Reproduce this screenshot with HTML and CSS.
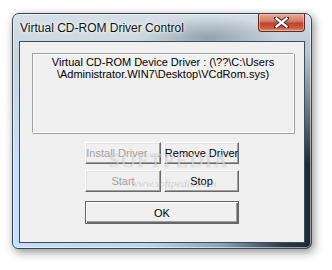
FILE: index.html
```html
<!DOCTYPE html>
<html>
<head>
    <title>Virtual CD-ROM Driver Control</title>
    <link rel="stylesheet" href="styles.css">
</head>
<body>
    <div class="stage">
        <div class="window">
            <div class="titlebar">
                <span class="title">Virtual CD-ROM Driver Control</span>
                <div class="close-btn">
                    <svg width="15" height="11" viewBox="0 0 15 11">
                        <path d="M2 1 L13 10 M13 1 L2 10" stroke="#3a2a28" stroke-width="4.2" stroke-linecap="square"/>
                        <path d="M2.6 1.6 L12.4 9.4 M12.4 1.6 L2.6 9.4" stroke="#fff" stroke-width="2.4" stroke-linecap="square"/>
                    </svg>
                </div>
            </div>
            <div class="client">
                <div class="status-box">
                    Virtual CD-ROM Device Driver : (\??\C:\Users<br>\Administrator.WIN7\Desktop\VCdRom.sys)
                </div>
                <div class="button-grid">
                    <div class="btn disabled">Install Driver ...</div>
                    <div class="btn">Remove Driver</div>
                    <div class="btn disabled">Start</div>
                    <div class="btn">Stop</div>
                </div>
                <div class="btn btn-default">OK</div>
                <!-- softpedia watermark from the screenshot -->
                <div class="watermark">SOFTPEDIA</div>
                <div class="watermark-url">www.softpedia.com</div>
            </div>
        </div>
    </div>
</body>
</html>
```

FILE: styles.css
```css
body {
    margin: 0;
    background-color: #fff;
    font-family: "Liberation Sans", Arial, sans-serif;
}

.stage {
    width: 332px;
    height: 270px;
    padding: 13px 0 0 12px;
    box-sizing: border-box;
}

.window {
    width: 300px;
    height: 236px;
    box-sizing: border-box;
    display: flex;
    flex-direction: column;
    padding: 0 6px 5px 6px;
    border: 1px solid #3d4650;
    border-radius: 7px 7px 6px 6px;
    background:
        radial-gradient(ellipse 70px 22px at 195px 24px, rgba(95, 108, 120, 0.5), rgba(95, 108, 120, 0) 100%),
        linear-gradient(to bottom, rgba(214, 223, 231, 1) 0, rgba(200, 212, 222, 0.9) 40px, rgba(200, 212, 222, 0) 150px),
        linear-gradient(to right, #c4e0fa 0%, #b8d5f0 45%, #8aa2b8 70%, #2c3c4c 90%, #1c2834 100%);
    box-shadow: inset 0 0 0 1px rgba(255, 255, 255, 0.55), 2px 3px 10px rgba(0, 0, 0, 0.45);
}

.titlebar {
    height: 27px;
    display: flex;
    align-items: center;
}

.title {
    margin-left: 1px;
    font-size: 12px;
    color: #111;
    text-shadow: 0 0 6px #fff, 0 0 3px #fff;
}

.close-btn {
    align-self: flex-start;
    margin-left: auto;
    width: 47px;
    height: 18px;
    box-sizing: border-box;
    display: flex;
    align-items: center;
    justify-content: center;
    border: 1px solid #5a2a22;
    border-top: none;
    border-radius: 0 0 4px 4px;
    background: linear-gradient(to bottom, #e6a895 0%, #d7806a 40%, #c0432c 55%, #c95a40 80%, #e08a6a 100%);
    box-shadow: inset 0 0 0 1px rgba(255, 220, 200, 0.5);
}

.client {
    flex: 1;
    position: relative;
    border: 1px solid #3e4c5a;
    background-color: #f0f0f0;
    display: flex;
    flex-direction: column;
    align-items: center;
}

.status-box {
    align-self: flex-start;
    width: 262px;
    height: 80px;
    box-sizing: border-box;
    margin: 11px 0 0 12px;
    padding-top: 2px;
    border: 1px solid #a0a0a0;
    border-right-color: #fff;
    border-bottom-color: #fff;
    box-shadow: inset 1px 1px 0 #fff, 1px 1px 0 #a0a0a0;
    font-size: 11px;
    line-height: 12px;
    text-align: center;
    color: #000;
}

.button-grid {
    display: grid;
    grid-template-columns: 76px 75px;
    column-gap: 3px;
    row-gap: 6px;
    margin-top: 9px;
}

.btn {
    height: 22px;
    box-sizing: border-box;
    display: flex;
    align-items: center;
    justify-content: center;
    border: 1px solid;
    border-color: #fff #696969 #696969 #fff;
    box-shadow: inset -1px -1px 0 #a0a0a0, inset 1px 1px 0 #e3e3e3;
    background-color: #f0f0f0;
    font-size: 11px;
    color: #000;
    white-space: nowrap;
    overflow: visible;
}

.btn.disabled {
    color: #a0a0a0;
}

.btn-default {
    width: 154px;
    height: 23px;
    margin-top: 9px;
    border-color: #646464;
    box-shadow: inset 1px 1px 0 #fff, inset -1px -1px 0 #696969, inset -2px -2px 0 #a0a0a0;
}

.watermark {
    position: absolute;
    left: 89px;
    top: 108px;
    font-family: "Liberation Serif", serif;
    font-size: 19px;
    letter-spacing: 2px;
    color: rgba(255, 255, 255, 0.55);
    text-shadow: 0 0 1px rgba(120, 120, 120, 0.5);
}

.watermark-url {
    position: absolute;
    left: 111px;
    top: 135px;
    font-family: "Liberation Serif", serif;
    font-style: italic;
    font-size: 11px;
    color: rgba(160, 160, 160, 0.45);
}
```
